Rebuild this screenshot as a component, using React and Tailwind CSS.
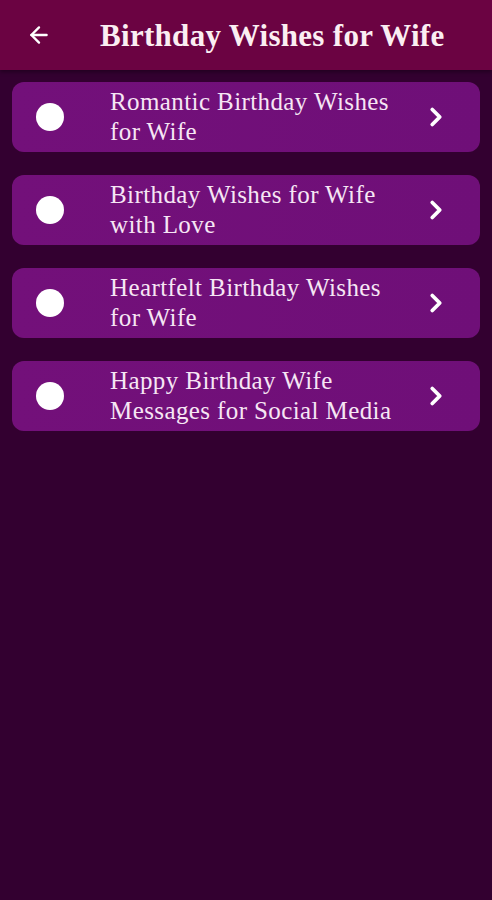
import { ArrowLeft, ChevronRight } from 'lucide-react'

const items = [
  ['Romantic Birthday Wishes', 'for Wife'],
  ['Birthday Wishes for Wife', 'with Love'],
  ['Heartfelt Birthday Wishes', 'for Wife'],
  ['Happy Birthday Wife', 'Messages for Social Media'],
]

export default function App() {
  return (
    <div className="min-h-[900px] w-[492px] bg-[#330030] font-['Liberation_Serif',serif]">
      {/* top bar */}
      <div className="h-[70px] bg-[#6b0342] flex items-center shadow-[0_2px_4px_rgba(0,0,0,0.35)]">
        <ArrowLeft size={26} strokeWidth={2.2} className="text-white ml-[26px]" />
        <h1 className="ml-[48px] text-[31px] tracking-[0.3px] font-bold text-[#fbeef2] leading-none">
          Birthday Wishes for Wife
        </h1>
      </div>

      <div className="flex flex-col gap-[23px] px-[12px] pt-[12px]">
        {items.map((lines, i) => (
          <div
            key={i}
            className="h-[70px] rounded-[12px] bg-gradient-to-r from-[#73107a] to-[#6f0f78] flex items-center"
          >
            <div className="w-[28px] h-[28px] rounded-full bg-white ml-[24px] shrink-0" />
            <div className="ml-[46px] flex-1 text-[25px] tracking-[0.4px] leading-[30px] text-[#f6e6f4]">
              {lines.map((l, j) => (
                <div key={j}>{l}</div>
              ))}
            </div>
            <ChevronRight size={30} strokeWidth={3} className="text-white mr-[29px] shrink-0" />
          </div>
        ))}
      </div>
    </div>
  )
}
